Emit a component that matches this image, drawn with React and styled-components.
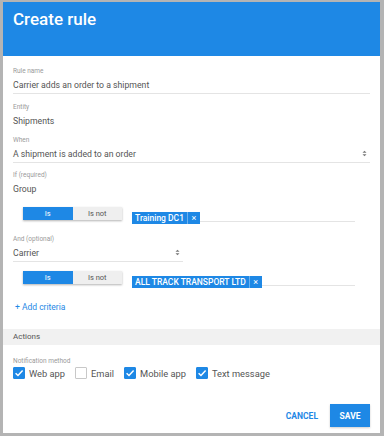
import React from "react";
import styled, { createGlobalStyle } from "styled-components";

const GlobalStyle = createGlobalStyle`
  body {
    margin: 0;
    background: #ffffff;
    font-family: Roboto, "Liberation Sans", sans-serif;
  }
`;

const BLUE = "#1e88e5";

const Check = () => (
  <svg width="10" height="10" viewBox="0 0 10 10">
    <path d="M1.6 5.2 L4 7.5 L8.6 2.6" fill="none" stroke="#fff" strokeWidth="1.5" />
  </svg>
);

const Arrows = () => (
  <svg width="5" height="7" viewBox="0 0 5 7">
    <path d="M0.5 2.8 L2.5 0.8 L4.5 2.8 Z M0.5 4.2 L2.5 6.2 L4.5 4.2 Z" fill="#777" />
  </svg>
);

const Toggle = () => (
  <Segment>
    <SegButton $active>Is</SegButton>
    <SegButton>Is not</SegButton>
  </Segment>
);

const Criteria = ({ chip, top }) => (
  <CriteriaRow $top={top}>
    <Toggle />
    <ChipField>
      <Chip>
        <ChipText>{chip}</ChipText>
        <ChipClose>×</ChipClose>
      </Chip>
    </ChipField>
  </CriteriaRow>
);

const methods = [
  { label: "Web app", checked: true },
  { label: "Email", checked: false },
  { label: "Mobile app", checked: true },
  { label: "Text message", checked: true },
];

const App = () => {
  return (
    <>
      <GlobalStyle />
      <Frame>
        <Header>
          <Title>Create rule</Title>
        </Header>
        <Body>
          <Field $top={10}>
            <Label>Rule name</Label>
            <Value $line>Carrier adds an order to a shipment</Value>
          </Field>
          <Field $top={8}>
            <Label>Entity</Label>
            <Value>Shipments</Value>
          </Field>
          <Field $top={5}>
            <Label>When</Label>
            <Value $line>
              A shipment is added to an order
              <Arrows />
            </Value>
          </Field>
          <Field $top={7}>
            <Label>If (required)</Label>
            <Value>Group</Value>
          </Field>
          <Criteria chip="Training DC1" top={6} />
          <Field $top={12} $width={170}>
            <Label>And (optional)</Label>
            <Value $line>
              Carrier
              <Arrows />
            </Value>
          </Field>
          <Criteria chip="ALL TRACK TRANSPORT LTD" top={6} />
          <AddLink>+ Add criteria</AddLink>
        </Body>
        <SectionBar>Actions</SectionBar>
        <Notify>
          <Label>Notification method</Label>
          <CheckRow>
            {methods.map((m) => (
              <CheckItem key={m.label}>
                <Box $checked={m.checked}>{m.checked && <Check />}</Box>
                {m.label}
              </CheckItem>
            ))}
          </CheckRow>
        </Notify>
        <Footer>
          <TextButton>CANCEL</TextButton>
          <SaveButton>SAVE</SaveButton>
        </Footer>
      </Frame>
    </>
  );
};

const Frame = styled.div`
  width: 384px;
  height: 436px;
  box-sizing: border-box;
  border-style: solid;
  border-color: #b4b4b4;
  border-width: 2px 4px 3px 3px;
  background: #fff;
  display: flex;
  flex-direction: column;
`;

const Header = styled.div`
  height: 54px;
  flex-shrink: 0;
  background: ${BLUE};
  padding: 7px 10px 0;
  box-sizing: border-box;
`;

const Title = styled.div`
  color: #fff;
  font-size: 17px;
  line-height: 20px;
  font-weight: 500;
`;

const Body = styled.div`
  padding: 0 10px;
  display: flex;
  flex-direction: column;
`;

const Field = styled.div`
  margin-top: ${(p) => p.$top}px;
  width: ${(p) => (p.$width ? `${p.$width}px` : "auto")};
  display: flex;
  flex-direction: column;
`;

const Label = styled.div`
  font-size: 6.5px;
  line-height: 10px;
  height: 10px;
  color: #9a9a9a;
`;

const Value = styled.div`
  height: 18px;
  box-sizing: border-box;
  display: flex;
  align-items: center;
  justify-content: space-between;
  font-size: 8.7px;
  color: #555;
  padding-right: 3px;
  border-bottom: 1px solid ${(p) => (p.$line ? "#e4e4e4" : "transparent")};
`;

const CriteriaRow = styled.div`
  margin-top: ${(p) => p.$top}px;
  padding-left: 10px;
  display: flex;
  align-items: flex-start;
  gap: 10px;
`;

const Segment = styled.div`
  margin-top: 3px;
  display: flex;
  width: 99px;
  height: 13px;
  box-shadow: 0 1px 2px rgba(0, 0, 0, 0.3);
`;

const SegButton = styled.div`
  flex: 1;
  display: flex;
  align-items: center;
  justify-content: center;
  font-size: 7.5px;
  background: ${(p) => (p.$active ? BLUE : "#efefef")};
  color: ${(p) => (p.$active ? "#fff" : "#555")};
`;

const ChipField = styled.div`
  width: 223px;
  height: 18px;
  padding-top: 2px;
  box-sizing: border-box;
  border-bottom: 1px solid #e4e4e4;
`;

const Chip = styled.div`
  display: inline-flex;
  align-items: stretch;
  height: 12px;
  background: ${BLUE};
  color: #fff;
`;

const ChipText = styled.span`
  padding: 0 3px;
  font-size: 8.5px;
  font-weight: 500;
  line-height: 12px;
`;

const ChipClose = styled.span`
  width: 12px;
  font-size: 9px;
  line-height: 12px;
  text-align: center;
  border-left: 1px solid rgba(255, 255, 255, 0.35);
`;

const AddLink = styled.div`
  margin-top: 15px;
  padding-left: 2px;
  height: 12px;
  font-size: 8.5px;
  line-height: 12px;
  color: ${BLUE};
`;

const SectionBar = styled.div`
  margin-top: 16px;
  height: 16px;
  flex-shrink: 0;
  background: #f1f1f1;
  padding-left: 10px;
  font-size: 8px;
  line-height: 16px;
  color: #555;
`;

const Notify = styled.div`
  margin-top: 11px;
  padding-left: 10px;
  display: flex;
  flex-direction: column;
`;

const CheckRow = styled.div`
  margin-top: 1px;
  height: 12px;
  display: flex;
  gap: 10px;
`;

const CheckItem = styled.div`
  display: flex;
  align-items: center;
  gap: 4px;
  font-size: 9.3px;
  color: #555;
`;

const Box = styled.span`
  width: 12px;
  height: 12px;
  box-sizing: border-box;
  display: flex;
  align-items: center;
  justify-content: center;
  background: ${(p) => (p.$checked ? BLUE : "#fff")};
  border: 1px solid ${(p) => (p.$checked ? BLUE : "#c8c8c8")};
  border-radius: 1px;
`;

const Footer = styled.div`
  margin-top: auto;
  margin-bottom: 6px;
  padding-right: 10px;
  display: flex;
  justify-content: flex-end;
  align-items: center;
  gap: 12px;
`;

const TextButton = styled.div`
  font-size: 8.5px;
  font-weight: 700;
  color: ${BLUE};
`;

const SaveButton = styled.div`
  width: 40px;
  height: 23px;
  background: ${BLUE};
  color: #fff;
  font-size: 8.5px;
  font-weight: 700;
  display: flex;
  align-items: center;
  justify-content: center;
  box-shadow: 0 1px 2px rgba(0, 0, 0, 0.2);
`;

export default App;
